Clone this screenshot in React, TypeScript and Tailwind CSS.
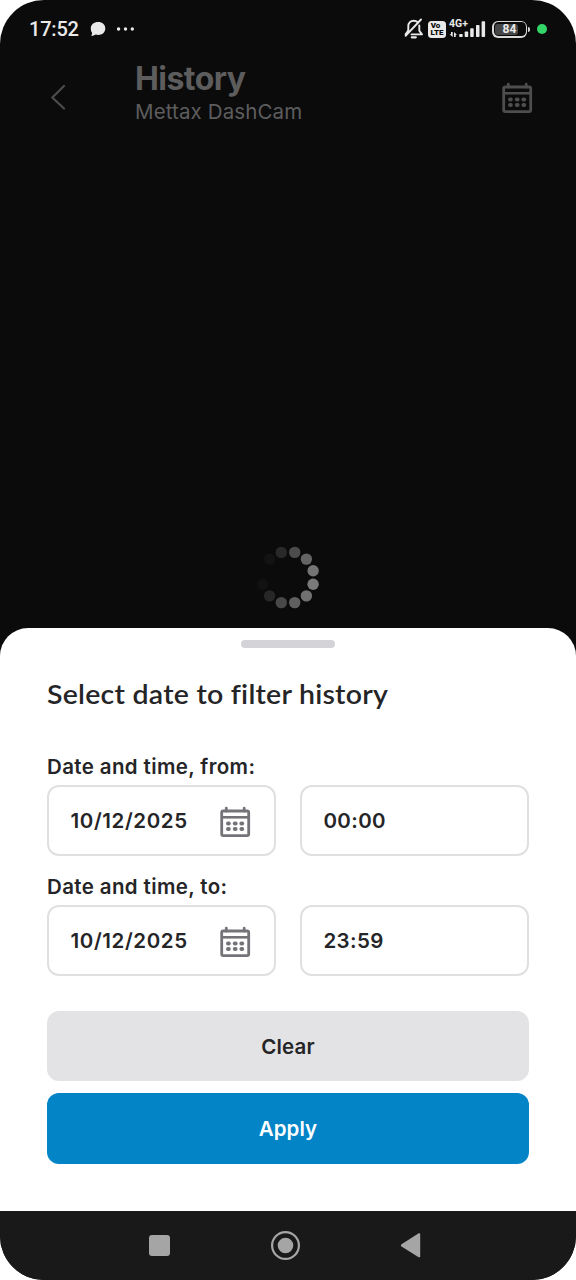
import clsx from "clsx";

const spinnerDots = [
  { angle: 15, color: "#4c4c4c" },
  { angle: 45, color: "#646464" },
  { angle: 75, color: "#747474" },
  { angle: 105, color: "#7a7a7a" },
  { angle: 135, color: "#707070" },
  { angle: 165, color: "#606060" },
  { angle: 195, color: "#484848" },
  { angle: 225, color: "#272727" },
  { angle: 255, color: "#121212" },
  { angle: 315, color: "#131313" },
  { angle: 345, color: "#292929" },
];

const ranges = [
  { label: "Date and time, from:", date: "10/12/2025", time: "00:00" },
  { label: "Date and time, to:", date: "10/12/2025", time: "23:59" },
];

const CalendarIcon = ({ className }: { className?: string }) => (
  <svg viewBox="0 0 32 32" className={clsx("h-8 w-8", className)} fill="none">
    <rect x="2.7" y="5" width="27" height="24.6" rx="1.6" stroke="currentColor" strokeWidth="2.8" />
    <path d="M2.7 11.3h27" stroke="currentColor" strokeWidth="2.6" />
    <path d="M7.3 5V2.2M25.2 5V2.2" stroke="currentColor" strokeWidth="2.8" strokeLinecap="round" />
    {[17.4, 23].map((y) =>
      [9.4, 16.2, 22.8].map((x) => (
        <rect key={`${x}-${y}`} x={x - 2.4} y={y - 2} width="4.8" height="4.1" rx="2" fill="currentColor" />
      )),
    )}
  </svg>
);

const StatusBar = () => (
  <div className="flex h-[58px] items-center pr-[29px] pl-[29px] text-[#e9e9e9]">
    <span className="w-[50px] font-['Roboto'] text-[20px] leading-6 font-medium tracking-[-0.2px] whitespace-nowrap">
      17:52
    </span>
    <svg viewBox="0 0 16 16" className="ml-[11px] h-4 w-4" fill="currentColor">
      <path d="M8.2 1C12.3 1 15.3 3.7 15.3 7.4s-3 6.5-7.1 6.5c-.9 0-1.7-.1-2.4-.3L2.2 15c-.5.2-.9-.2-.7-.7l.7-2.4C1.3 10.700.8 9.200.8 7.400.8 3.700 3.900 1 8.200 1z" />
    </svg>
    <svg viewBox="0 0 18 4" className="ml-[11px] h-1 w-[18px]" fill="currentColor">
      <circle cx="1.6" cy="2" r="1.7" />
      <circle cx="8.5" cy="2" r="1.7" />
      <circle cx="15.3" cy="2" r="1.7" />
    </svg>

    <div className="ml-auto flex items-center">
      {/* Muted bell */}
      <svg
        viewBox="0 0 20 22"
        className="h-[22px] w-5"
        fill="none"
        stroke="currentColor"
        strokeWidth="1.9"
        strokeLinecap="round"
        strokeLinejoin="round"
      >
        <path d="M4.300 12.500V8.200C4.300 4.800 6.600 2.700 9.800 2.700c1.500 0 2.800.5 3.800 1.300M15.300 7.500v5.200l2.700 3.700H7.500" />
        <path d="M17 1.500L1.600 17.800M4.300 12.500l-2.700 3.900" />
        <path d="M7.800 19.300h4" strokeWidth="2.2" />
      </svg>

      {/* VoLTE */}
      <div className="ml-[4px] flex h-[17px] w-[18px] flex-col items-center justify-center rounded-[3.5px] bg-[#e9e9e9] font-['Roboto'] text-[8px] leading-[7px] font-black text-[#0b0b0b]">
        <span className="-ml-[3px]">Vo</span>
        <span>LTE</span>
      </div>

      {/* Signal */}
      <div className="relative ml-[3px] h-[18px] w-[38px]">
        <span className="absolute -top-[2px] left-0 font-['Roboto'] text-[10.5px] leading-3 font-bold">
          4G+
        </span>
        <svg viewBox="0 0 38 18" className="h-[18px] w-[38px]" fill="currentColor">
          <path d="M2 12h1.700v5L.5 14.200H2zM5 17v-5l3 2.800H6.700V17z" />
          <rect x="10.2" y="14" width="3.5" height="3" rx=".8" />
          <rect x="15.7" y="11.5" width="3.5" height="5.5" rx=".8" />
          <rect x="21.2" y="8.2" width="3.5" height="8.8" rx=".8" />
          <rect x="27" y="5" width="3.5" height="12" rx=".8" />
          <rect x="32.6" y="1.2" width="3.5" height="15.8" rx=".8" />
        </svg>
      </div>

      {/* Battery */}
      <div className="ml-[5px] flex items-center">
        <div className="relative flex h-[17px] w-[35px] items-center justify-center overflow-hidden rounded-[6px] bg-[#d8d8d8]">
          <div className="absolute inset-[1.5px] rounded-[4.5px] bg-[#0b0b0b]" />
          <div className="absolute inset-y-[3px] left-[3px] w-[23px] rounded-[3px] bg-[#464646]" />
          <span className="relative font-['Roboto'] text-[12px] leading-3 font-bold">84</span>
        </div>
        <div className="ml-px h-[5px] w-[2px] rounded-r-full bg-[#d8d8d8]" />
      </div>
      <div className="ml-[7px] h-2.5 w-2.5 rounded-full bg-[#34d568]" />
    </div>
  </div>
);

const Header = () => (
  <header className="flex h-[80px] pt-[2px] text-[#5d5d5e]">
    <svg
      viewBox="0 0 16 26"
      className="mt-[24px] ml-[50px] h-[26px] w-4 text-[#4c4c4c]"
      fill="none"
      stroke="currentColor"
      strokeWidth="2.2"
      strokeLinecap="round"
      strokeLinejoin="round"
    >
      <path d="M14 2L2.300 13.500 14 24.500" />
    </svg>
    <div className="ml-[69px]">
      <h1 className="text-[32px] leading-[38px] font-bold tracking-[-0.55px]">History</h1>
      <p className="text-[20.5px] leading-[28px] tracking-[0.12px]">Mettax DashCam</p>
    </div>
    <CalendarIcon className="mt-[22px] mr-[43px] ml-auto text-[#4e4e4f]" />
  </header>
);

const Spinner = () => (
  <svg viewBox="-32 -32 64 64" className="h-16 w-16">
    {spinnerDots.map(({ angle, color }) => {
      const rad = (angle * Math.PI) / 180;
      return (
        <circle key={angle} cx={26 * Math.sin(rad)} cy={-0.5 - 26 * Math.cos(rad)} r="5.7" fill={color} />
      );
    })}
  </svg>
);

const FilterSheet = () => (
  <section className="h-[583px] rounded-t-[28px] bg-white px-[47px] pt-3 text-[#252527]">
    <div className="mx-auto h-2 w-[94px] rounded-full bg-[#d3d3d8]" />
    <h2 className="mt-[28px] origin-left scale-x-[1.075] font-['Lato'] text-[26.5px] leading-9 font-semibold tracking-[0.22px] whitespace-nowrap [font-variant-ligatures:none]">
      Select date to filter history
    </h2>

    <div className="mt-[38px] flex flex-col gap-[14px]">
      {ranges.map(({ label, date, time }) => (
        <div key={label}>
          <p className="h-[35px] text-[20.5px] leading-[34px] font-semibold tracking-[0.38px]">{label}</p>
          <div className="grid grid-cols-2 gap-6">
            <div className="flex h-[71px] items-center justify-between rounded-[12px] border-2 border-[#e0e0e1] pt-px pr-[23px] pl-[21.5px]">
              <span className="text-[20.5px] font-semibold tracking-[0.6px]">{date}</span>
              <CalendarIcon className="mt-px text-[#747478]" />
            </div>
            <div className="flex h-[71px] items-center rounded-[12px] border-2 border-[#e0e0e1] pt-px pl-[21.5px]">
              <span className="text-[20.5px] font-semibold tracking-[0.35px]">{time}</span>
            </div>
          </div>
        </div>
      ))}
    </div>

    <div className="mt-[35px] flex flex-col gap-3">
      <button className="h-[70px] rounded-[12px] bg-[#e3e3e5] pt-[2px] text-[20.5px] font-semibold tracking-[0.2px]">
        Clear
      </button>
      <button className="h-[71px] rounded-[12px] bg-[#0284c7] pt-px text-[20.5px] font-semibold tracking-[0.1px] text-white">
        Apply
      </button>
    </div>
  </section>
);

const NavigationBar = () => (
  <nav className="h-[69px] bg-[#19191a] text-[#a5a5a5]">
    <svg viewBox="0 0 576 69" className="h-[69px] w-full" fill="currentColor">
      <rect x="149" y="24" width="21" height="21" rx="3" />
      <circle cx="285.5" cy="34.5" r="13.4" fill="none" stroke="currentColor" strokeWidth="2.2" />
      <circle cx="285.5" cy="34.5" r="7.8" />
      <path d="M401.500 33.200L418.700 22.300c.7-.4 1.500 0 1.500.8v22.300c0 .8-.8 1.200-1.500.8L401.500 35.400c-.8-.5-.8-1.700 0-2.200z" />
    </svg>
  </nav>
);

export default function App() {
  return (
    <div className="h-[1280px] w-[576px] overflow-hidden bg-white font-['Inter',sans-serif]">
      <main className="flex h-full flex-col overflow-hidden rounded-[44px] bg-[#0b0b0b]">
        <StatusBar />
        <Header />
        <div className="flex h-[490px] items-end justify-center pb-[18px]">
          <Spinner />
        </div>
        <FilterSheet />
        <NavigationBar />
      </main>
    </div>
  );
}
